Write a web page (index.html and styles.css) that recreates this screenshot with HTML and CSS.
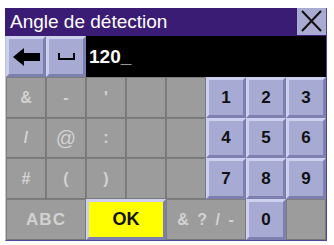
FILE: index.html
```html
<!DOCTYPE html>
<html>
<head>
<meta charset="utf-8">
<link rel="stylesheet" href="styles.css">
</head>
<body>
<div class="panel">
  <div class="title">
    <div class="title-text">Angle de détection</div>
    <div class="close">
      <svg width="29" height="27" viewBox="0 0 29 27"><path d="M5 3 L24 23 M24 3 L5 23" stroke="#111" stroke-width="2" fill="none"/></svg>
    </div>
  </div>
  <div class="input-row">
    <div class="key tkey">
      <svg width="27" height="18" viewBox="0 0 27 18"><path d="M0 9 L11 0 L11 5 L27 5 L27 13 L11 13 L11 18 Z" fill="#000"/></svg>
    </div>
    <div class="key tkey">
      <svg width="17" height="9" viewBox="0 0 17 9"><path d="M1 1 L1 7 L16 7 L16 1" stroke="#000" stroke-width="2" fill="none"/></svg>
    </div>
    <div class="field">120_</div>
  </div>
  <div class="grid">
    <div class="cell">&amp;</div>
    <div class="cell">-</div>
    <div class="cell">'</div>
    <div class="cell"></div>
    <div class="cell"></div>
    <div class="key num">1</div>
    <div class="key num">2</div>
    <div class="key num">3</div>

    <div class="cell">/</div>
    <div class="cell at">@</div>
    <div class="cell">:</div>
    <div class="cell"></div>
    <div class="cell"></div>
    <div class="key num">4</div>
    <div class="key num">5</div>
    <div class="key num">6</div>

    <div class="cell">#</div>
    <div class="cell">(</div>
    <div class="cell">)</div>
    <div class="cell"></div>
    <div class="cell"></div>
    <div class="key num">7</div>
    <div class="key num">8</div>
    <div class="key num">9</div>

    <div class="cell wide abc">ABC</div>
    <div class="key ok">OK</div>
    <div class="cell wide sym">&amp; ? / -</div>
    <div class="key num">0</div>
    <div class="cell"></div>
  </div>
</div>
</body>
</html>
```
FILE: styles.css
```css
body {
  margin: 0;
  background: #ffffff;
  font-family: "Liberation Sans", Arial, sans-serif;
}
.panel {
  margin: 8px 0 0 5px;
  width: 320px;
  border-left: 1px solid #c4c4cc;
  border-right: 1px solid #4848a0;
  border-bottom: 1px solid #4848a0;
}
.title {
  display: flex;
  height: 28px;
  background: #3b1c74;
  margin-left: -1px;
}
.title-text {
  flex: 1;
  color: #ffffff;
  font-size: 19px;
  line-height: 28px;
  padding-left: 5px;
}
.close {
  width: 29px;
  height: 27px;
  background: #a9abd2;
  display: flex;
  align-items: center;
  justify-content: center;
}
.input-row {
  display: flex;
  height: 41px;
}
.key {
  box-sizing: border-box;
  background: #a7aad3;
  border-style: solid;
  border-width: 3px;
  border-color: #cdd0ee #7d80ae #7d80ae #cdd0ee;
  display: flex;
  align-items: center;
  justify-content: center;
}
.tkey {
  width: 40px;
  height: 41px;
}
.field {
  flex: 1;
  background: #000000;
  color: #ffffff;
  font-weight: bold;
  font-size: 19px;
  line-height: 41px;
  padding-left: 3px;
}
.grid {
  display: grid;
  grid-template-columns: repeat(8, 40px);
  grid-template-rows: 41px 40px 41px 41px;
  background: #9c9c9c;
}
.cell {
  box-sizing: border-box;
  background: #9c9c9c;
  box-shadow: inset -1px -1px 0 #787878, inset 1px 1px 0 #7e7e7e;
  color: #d2d2d2;
  font-weight: bold;
  font-size: 16px;
  display: flex;
  align-items: center;
  justify-content: center;
}
.cell.at {
  font-weight: normal;
  font-size: 20px;
}
.wide {
  grid-column: span 2;
}
.abc {
  font-size: 17px;
  letter-spacing: 1px;
}
.sym {
  font-size: 16px;
  letter-spacing: 1px;
  word-spacing: 2px;
}
.num {
  color: #111111;
  font-weight: bold;
  font-size: 17px;
}
.ok {
  grid-column: span 2;
  background: #ffff00;
  color: #111111;
  font-weight: bold;
  font-size: 18px;
}
```
